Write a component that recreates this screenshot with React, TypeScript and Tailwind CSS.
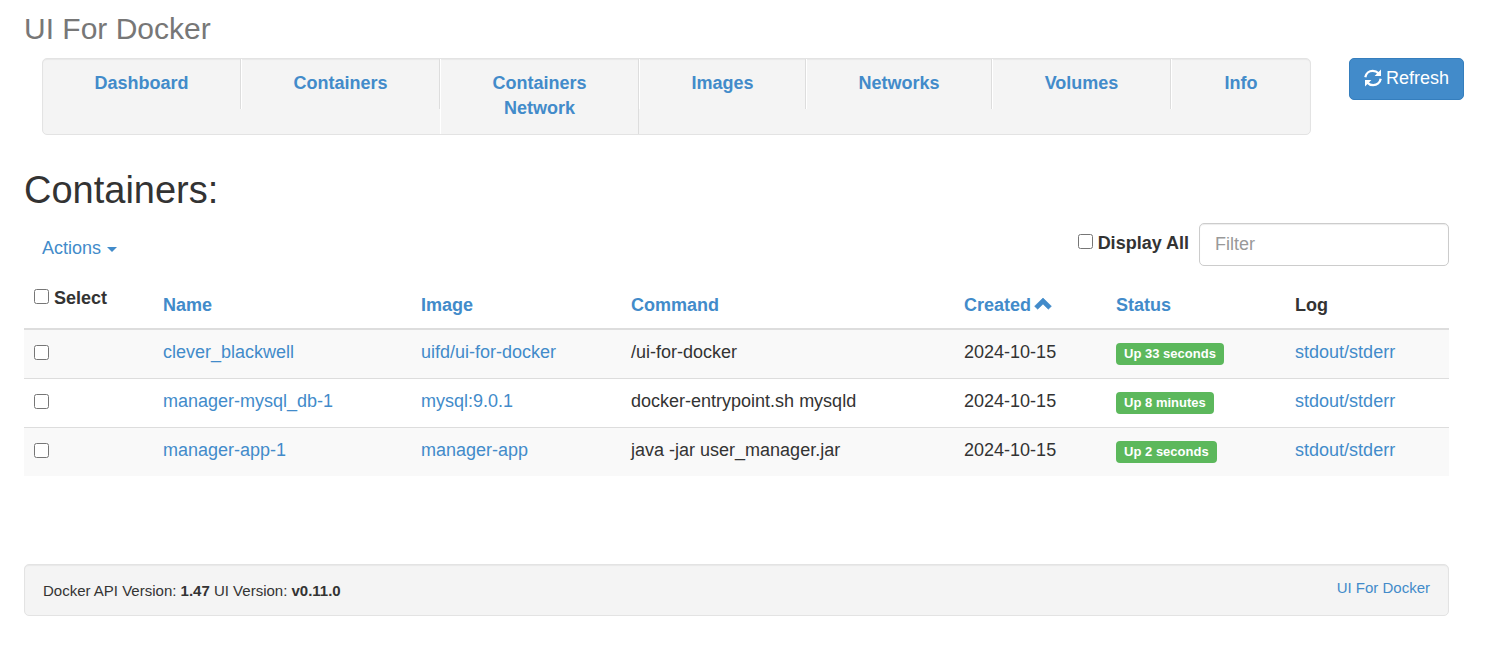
import React from "react";

type NavItem = { label: string; grow: string };

const navItems: NavItem[] = [
  { label: "Dashboard", grow: "grow-[198]" },
  { label: "Containers", grow: "grow-[199]" },
  { label: "Containers Network", grow: "grow-[199]" },
  { label: "Images", grow: "grow-[167]" },
  { label: "Networks", grow: "grow-[186]" },
  { label: "Volumes", grow: "grow-[179]" },
  { label: "Info", grow: "grow-[139]" },
];

type Container = { name: string; image: string; command: string; created: string; status: string };

const containers: Container[] = [
  { name: "clever_blackwell", image: "uifd/ui-for-docker", command: "/ui-for-docker", created: "2024-10-15", status: "Up 33 seconds" },
  { name: "manager-mysql_db-1", image: "mysql:9.0.1", command: "docker-entrypoint.sh mysqld", created: "2024-10-15", status: "Up 8 minutes" },
  { name: "manager-app-1", image: "manager-app", command: "java -jar user_manager.jar", created: "2024-10-15", status: "Up 2 seconds" },
];

const link = "text-[#428bca] hover:underline";
const well = "rounded-[5px] border border-[#e3e3e3] bg-[#f4f4f4] shadow-[inset_0_1px_1px_rgba(0,0,0,0.05)]";

function RefreshIcon() {
  return (
    <svg viewBox="0 0 18 18" className="mb-[2px] size-[18px]" aria-hidden="true">
      <g fill="none" stroke="currentColor" strokeWidth="2.3">
        <path d="M1.3 8.2C2 4.4 5 1.8 8.8 1.8C11.2 1.8 13 2.7 14.6 4.4" />
        <path d="M16.7 9.8C16 13.6 13 16.2 9.2 16.2C6.8 16.2 5 15.3 3.4 13.6" />
      </g>
      <path fill="currentColor" d="M17 0.6V7H10.6ZM1 17.4V11H7.4Z" />
    </svg>
  );
}

function SortUpIcon() {
  return (
    <svg viewBox="0 0 18 14" className="-ml-[2px] inline-block h-[14px] w-[18px] align-baseline" aria-hidden="true">
      <path d="M9 1L17.4 9.2L14.3 12.2L9 7.1L3.7 12.2L0.6 9.2Z" fill="currentColor" stroke="currentColor" strokeWidth="0.6" strokeLinejoin="round" />
    </svg>
  );
}

export default function App() {
  return (
    <div className="bg-white pb-[29px] font-['Liberation_Sans',Arial,sans-serif] text-[18px] leading-[25px] text-[#333]">
      <header>
        <h3 className="pt-3 pl-6 text-[30px] leading-[33px] text-[#777]">UI For Docker</h3>
        <div className="mt-[13px] flex items-start gap-[38px] pr-[38px] pl-[42px]">
          <nav className={`flex-1 ${well}`}>
            <ul className="flex items-start">
              {navItems.map((item, i) => (
                <li key={item.label} className={`min-w-0 basis-0 ${item.grow}`}>
                  <a
                    href="#"
                    className={`block px-10 pt-3 pb-[13px] text-center font-bold text-[#428bca] ${i > 0 ? "border-l border-l-white" : ""} ${i < navItems.length - 1 ? "border-r border-r-[#ddd]" : ""}`}
                  >
                    {item.label}
                  </a>
                </li>
              ))}
            </ul>
          </nav>
          <button
            type="button"
            className="flex items-center gap-1 rounded-[5px] border border-[#357ebd] bg-[#428bca] px-[14px] pt-[7px] pb-2 text-white"
          >
            <RefreshIcon />
            Refresh
          </button>
        </div>
      </header>

      <main className="pr-[53px] pl-6">
        <h2 className="mt-[34px] text-[38px] leading-[42px]">Containers:</h2>

        <div className="mt-3 flex items-start justify-between">
          <button type="button" className="mt-[13px] ml-[18px] flex items-center gap-[6px] text-[#428bca]">
            Actions
            <svg viewBox="0 0 10 5" className="mt-[2px] h-[5px] w-[10px]" aria-hidden="true">
              <path d="M0 0H10L5 5Z" fill="currentColor" />
            </svg>
          </button>
          <div className="flex items-start gap-[10px]">
            <label className="mt-2 flex items-center gap-[5px] font-bold">
              <input type="checkbox" className="mb-[5px] size-[15px]" />
              Display All
            </label>
            <input
              type="text"
              placeholder="Filter"
              aria-label="Filter"
              className="h-[43px] w-[250px] rounded-[5px] border border-[#ccc] bg-white px-[15px] shadow-[inset_0_1px_1px_rgba(0,0,0,0.075)] placeholder:text-[#999]"
            />
          </div>
        </div>

        <table className="mt-[10px] w-full table-fixed border-separate border-spacing-0 text-left">
          <colgroup>
            <col className="w-[9.05%]" />
            <col className="w-[18.11%]" />
            <col className="w-[14.74%]" />
            <col className="w-[23.37%]" />
            <col className="w-[10.67%]" />
            <col className="w-[12.56%]" />
            <col />
          </colgroup>
          <thead>
            <tr className="align-bottom *:border-b-2 *:border-[#ddd] *:px-[10px] *:pt-[10px] *:pb-[10px]">
              <th>
                <label className="mb-[7px] flex items-center gap-[5px]">
                  <input type="checkbox" className="mb-1 size-[15px]" />
                  Select
                </label>
              </th>
              <th><a href="#" className={link}>Name</a></th>
              <th><a href="#" className={link}>Image</a></th>
              <th><a href="#" className={link}>Command</a></th>
              <th className="whitespace-nowrap"><a href="#" className={link}>Created <SortUpIcon /></a></th>
              <th><a href="#" className={link}>Status</a></th>
              <th>Log</th>
            </tr>
          </thead>
          <tbody>
            {containers.map((c, i) => (
              <tr
                key={c.name}
                className={`align-top *:px-[10px] *:pt-[10px] *:pb-[13px] ${i % 2 === 0 ? "bg-[#f9f9f9]" : ""} ${i > 0 ? "*:border-t *:border-[#ddd]" : ""}`}
              >
                <td>
                  <div className="flex h-[25px] items-center">
                    <input type="checkbox" aria-label={`Select ${c.name}`} className="size-[15px]" />
                  </div>
                </td>
                <td><a href="#" className={link}>{c.name}</a></td>
                <td><a href="#" className={link}>{c.image}</a></td>
                <td>{c.command}</td>
                <td>{c.created}</td>
                <td>
                  <div className="mt-[3px] flex">
                    <span className="rounded-[4px] bg-[#5cb85c] px-2 text-[13px] leading-[22px] font-bold text-white">{c.status}</span>
                  </div>
                </td>
                <td><a href="#" className={link}>stdout/stderr</a></td>
              </tr>
            ))}
          </tbody>
        </table>

        <footer className={`mt-[88px] flex items-start justify-between px-[18px] pt-[10px] pb-3 text-[15px] ${well}`}>
          <p className="mt-[3px]">
            Docker API Version: <strong>1.47</strong> UI Version: <strong>v0.11.0</strong>
          </p>
          <a href="#" className={link}>UI For Docker</a>
        </footer>
      </main>
    </div>
  );
}
